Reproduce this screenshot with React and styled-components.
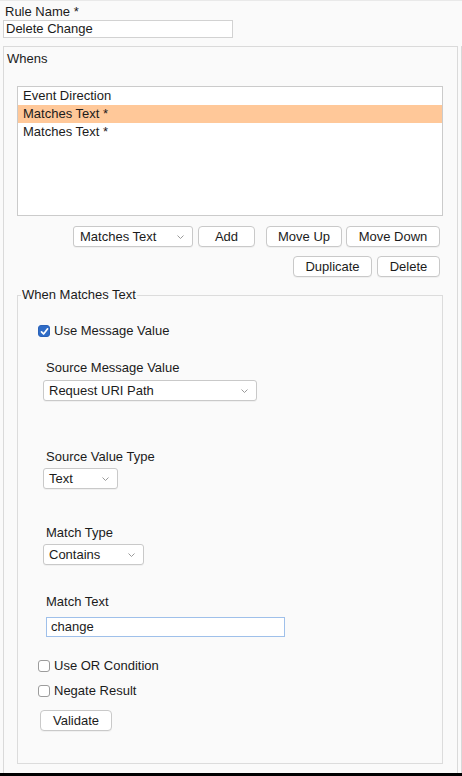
import React from 'react'
import styled, { createGlobalStyle } from 'styled-components'

const GlobalStyle = createGlobalStyle`
  html, body {
    margin: 0;
    padding: 0;
    background: #fafafa;
  }
  body {
    font-family: "Liberation Sans", Arial, sans-serif;
    font-size: 13px;
    color: #1b1b1b;
  }
`

const Chevron = () => (
  <svg width="7" height="4" viewBox="0 0 7 4">
    <polyline points="0.5,0.5 3.5,3.5 6.5,0.5" fill="none" stroke="#8e8e8e" strokeWidth="0.9" />
  </svg>
)

const Check = () => (
  <svg width="9" height="9" viewBox="0 0 9 9">
    <polyline points="1.5,4.8 3.6,7 7.6,1.8" fill="none" stroke="#fff" strokeWidth="1.7" strokeLinecap="round" strokeLinejoin="round" />
  </svg>
)

const rows = [
  { name: 'Event Direction' },
  { name: 'Matches Text *', selected: true },
  { name: 'Matches Text *' },
]

const App = () => {
  return (
    <Page>
      <GlobalStyle />
      <Top>
        <Label>Rule Name *</Label>
        <NameInput>Delete Change</NameInput>
      </Top>
      <Scroller>
        <Panel>
          <PanelTitle>Whens</PanelTitle>
          <List>
            {rows.map((r, i) => (
              <Row key={i} $selected={r.selected}>{r.name}</Row>
            ))}
          </List>
          <ButtonRow $mt={10}>
            <Select $w={120}>
              <span>Matches Text</span>
              <Chevron />
            </Select>
            <Button $w={57} $ml={5}>Add</Button>
            <Button $w={76} $ml={11}>Move Up</Button>
            <Button $w={94} $ml={4}>Move Down</Button>
          </ButtonRow>
          <ButtonRow $mt={9}>
            <Button $w={79}>Duplicate</Button>
            <Button $w={63} $ml={5}>Delete</Button>
          </ButtonRow>

          <Group>
            <Legend>When Matches Text</Legend>
            <CheckRow $mt={20}>
              <Box $checked>
                <Check />
              </Box>
              Use Message Value
            </CheckRow>

            <FieldLabel $mt={21}>Source Message Value</FieldLabel>
            <Select $w={214} $ml={25} $mt={4} $pl={5}>
              <span>Request URI Path</span>
              <Chevron />
            </Select>

            <FieldLabel $mt={48}>Source Value Type</FieldLabel>
            <Select $w={75} $ml={25} $mt={3} $pl={5}>
              <span>Text</span>
              <Chevron />
            </Select>

            <FieldLabel $mt={36}>Match Type</FieldLabel>
            <Select $w={101} $ml={25} $mt={3} $pl={5}>
              <span>Contains</span>
              <Chevron />
            </Select>

            <FieldLabel $mt={29}>Match Text</FieldLabel>
            <TextInput>change</TextInput>

            <CheckRow $mt={21}>
              <Box />
              Use OR Condition
            </CheckRow>
            <CheckRow $mt={9}>
              <Box />
              Negate Result
            </CheckRow>

            <Button $w={72} $ml={22} $mt={11}>Validate</Button>
          </Group>
        </Panel>
      </Scroller>
      <Footer />
    </Page>
  )
}

export default App

const Page = styled.div`
  height: 776px;
  width: 462px;
  display: flex;
  flex-direction: column;
  border-top: 1px solid #e9e9e9;
  box-sizing: border-box;
  overflow: hidden;
`

const Top = styled.div`
  padding: 3px 0 0 3px;
`

const Label = styled.div`
  line-height: 16px;
  padding-left: 2px;
`

const NameInput = styled.div`
  width: 230px;
  height: 18px;
  box-sizing: border-box;
  background: #fff;
  border: 1px solid #d2d2d2;
  line-height: 16px;
  padding-left: 2px;
`

const Scroller = styled.div`
  flex: 1;
  min-height: 0;
  overflow: hidden;
  margin-top: 8px;
  border-right: 1px solid #d9d9d9;
`

const Panel = styled.div`
  margin: 0 3px;
  border: 1px solid #dadada;
  padding: 3px 0 40px 0;
`

const PanelTitle = styled.div`
  line-height: 16px;
  padding-left: 3px;
  margin-top: 1px;
`

const List = styled.div`
  margin: 19px 14px 0 13px;
  height: 130px;
  box-sizing: border-box;
  background: #fff;
  border: 1px solid #cbcbcb;
`

const Row = styled.div`
  height: 18px;
  line-height: 18px;
  padding-left: 5px;
  background: ${p => (p.$selected ? '#ffc899' : 'transparent')};
`

const ButtonRow = styled.div`
  display: flex;
  justify-content: flex-end;
  margin: ${p => p.$mt}px 17px 0 0;
`

const Button = styled.div`
  width: ${p => p.$w}px;
  height: 21px;
  box-sizing: border-box;
  margin-left: ${p => p.$ml || 0}px;
  margin-top: ${p => p.$mt || 0}px;
  background: #fff;
  border: 1px solid #c9c9c9;
  border-radius: 4px;
  box-shadow: 0 1px 0 rgba(0, 0, 0, 0.04);
  line-height: 19px;
  text-align: center;
`

const Select = styled.div`
  width: ${p => p.$w}px;
  height: 21px;
  box-sizing: border-box;
  margin-left: ${p => p.$ml || 0}px;
  margin-top: ${p => p.$mt || 0}px;
  display: flex;
  align-items: center;
  justify-content: space-between;
  padding: 0 8px 0 ${p => p.$pl || 6}px;
  background: #fff;
  border: 1px solid #c9c9c9;
  border-radius: 3px;
  box-shadow: 0 1px 0 rgba(0, 0, 0, 0.04);
  line-height: 19px;

  svg {
    flex-shrink: 0;
  }
`

const Group = styled.fieldset`
  margin: 10px 14px 0 13px;
  padding: 0 0 32px 0;
  border: 1px solid #dcdcdc;
  min-width: 0;
`

const Legend = styled.legend`
  margin-left: 3px;
  padding: 0 1px;
  line-height: 16px;
`

const CheckRow = styled.div`
  display: flex;
  align-items: center;
  margin: ${p => p.$mt}px 0 0 20px;
  line-height: 16px;
`

const Box = styled.span`
  width: 12px;
  height: 12px;
  box-sizing: border-box;
  margin-right: 4px;
  border-radius: 3px;
  display: inline-flex;
  align-items: center;
  justify-content: center;
  background: ${p => (p.$checked ? '#2f6cc7' : '#fff')};
  border: 1px solid ${p => (p.$checked ? '#2a62b8' : '#9c9c9c')};
`

const FieldLabel = styled.div`
  margin: ${p => p.$mt}px 0 0 28px;
  line-height: 16px;
`

const TextInput = styled.div`
  width: 239px;
  height: 20px;
  box-sizing: border-box;
  margin: 7px 0 0 28px;
  padding-left: 4px;
  background: #fff;
  border: 1px solid #9fc0ea;
  line-height: 18px;
`

const Footer = styled.div`
  height: 3px;
  background: #000;
  flex-shrink: 0;
`
